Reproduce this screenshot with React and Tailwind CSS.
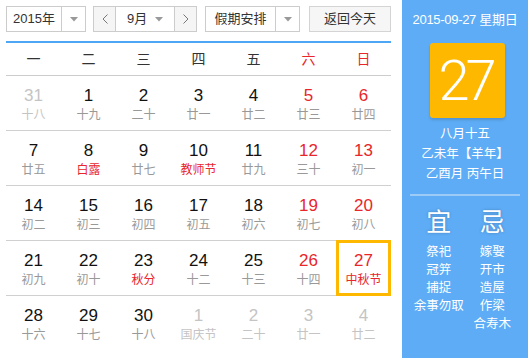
import React from "react";

const F = { fontFamily: '"Liberation Sans", Arial, "Noto Sans CJK SC", sans-serif' };

const rows = [
  [["31", "十八", "o"], ["1", "十九"], ["2", "二十"], ["3", "廿一"], ["4", "廿二"], ["5", "廿三", "w"], ["6", "廿四", "w"]],
  [["7", "廿五"], ["8", "白露", "h"], ["9", "廿七"], ["10", "教师节", "h"], ["11", "廿九"], ["12", "三十", "w"], ["13", "初一", "w"]],
  [["14", "初二"], ["15", "初三"], ["16", "初四"], ["17", "初五"], ["18", "初六"], ["19", "初七", "w"], ["20", "初八", "w"]],
  [["21", "初九"], ["22", "初十"], ["23", "秋分", "h"], ["24", "十二"], ["25", "十三"], ["26", "十四", "w"], ["27", "中秋节", "s"]],
  [["28", "十六"], ["29", "十七"], ["30", "十八"], ["1", "国庆节", "o"], ["2", "二十", "o"], ["3", "廿一", "o"], ["4", "廿二", "o"]],
];

function Caret() {
  return (
    <svg width="8" height="5" viewBox="0 0 8 5">
      <path d="M0 0H8L4 4.5Z" fill="#999" />
    </svg>
  );
}

function Chevron({ dir }) {
  return (
    <svg width="6" height="10" viewBox="0 0 6 10">
      <path d={dir === "l" ? "M5.5 0.5L1 5L5.5 9.5" : "M0.5 0.5L5 5L0.5 9.5"} fill="none" stroke="#777" strokeWidth="1" />
    </svg>
  );
}

function Cell({ d, last }) {
  const [n, l, t] = d;
  let numC = "text-[#111]";
  let lunC = "text-[#999]";
  if (t === "o") { numC = "text-[#c4c4c4]"; lunC = "text-[#c4c4c4]"; }
  if (t === "w") numC = "text-[#e8262b]";
  if (t === "h") lunC = "text-[#e8262b]";
  if (t === "s") { numC = "text-[#e8262b]"; lunC = "text-[#e8262b]"; }
  return (
    <div className={`relative flex flex-col items-center h-[55px] pt-[10px] ${last ? "" : "border-b border-[#d0d0d0]"}`}>
      {t === "s" && <div className="absolute left-0 right-0 top-[-1px] bottom-[-1px] border-[3px] border-[#ffb800]" />}
      <div className={`text-[17px] leading-[20px] ${numC}`}>{n}</div>
      <div className={`text-[12px] leading-[18px] ${lunC}`}>{l}</div>
    </div>
  );
}

export default function App() {
  return (
    <div className="w-[528px] h-[358px] flex overflow-hidden bg-white" style={F}>
      <div className="w-[402px] pl-[6px] pt-[6px]">
        <div className="w-[385px] flex h-[26px] text-[13px] text-[#333]">
          <div className="w-[80px] flex border border-[#ccc] bg-white">
            <div className="w-[54px] flex items-center justify-center">2015年</div>
            <div className="flex-1 flex items-center justify-center border-l border-[#ccc]"><Caret /></div>
          </div>
          <div className="ml-[7px] w-[104px] flex border border-[#ccc] bg-white">
            <div className="w-[22px] flex items-center justify-center bg-[#f5f5f5] border-r border-[#ccc]"><Chevron dir="l" /></div>
            <div className="flex-1 flex items-center pl-[11px]">9月</div>
            <div className="w-[22px] flex items-center justify-center mr-[4px]"><Caret /></div>
            <div className="w-[22px] flex items-center justify-center bg-[#f5f5f5] border-l border-[#ccc]"><Chevron dir="r" /></div>
          </div>
          <div className="ml-[8px] w-[95px] flex border border-[#ccc] bg-white">
            <div className="w-[69px] flex items-center justify-center">假期安排</div>
            <div className="flex-1 flex items-center justify-center border-l border-[#ccc]"><Caret /></div>
          </div>
          <div className="ml-[9px] w-[82px] flex items-center justify-center border border-[#d4d4d4] bg-[#f6f6f6]">返回今天</div>
        </div>
        <div className="w-[385px] h-[2px] bg-[#4ea7f5] mt-[9px]" />
        <div className="w-[385px] grid grid-cols-7 h-[33px] border-b border-[#ccc] text-[14px] text-[#333] items-center">
          {["一", "二", "三", "四", "五", "六", "日"].map((w, i) => (
            <div key={w} className={`text-center ${i >= 5 ? "text-[#e8262b]" : ""}`}>{w}</div>
          ))}
        </div>
        <div className="w-[385px] grid grid-cols-7">
          {rows.map((r, ri) => r.map((d, ci) => <Cell key={ri + "-" + ci} d={d} last={ri === rows.length - 1} />))}
        </div>
      </div>
      <div className="w-[126px] bg-[#5eacf6] flex flex-col items-center text-white">
        <div className="mt-[12px] text-[13px] leading-[16px] tracking-[-0.3px]">2015-09-27 星期日</div>
        <div className="mt-[15px] ml-[4px] w-[75px] h-[75px] rounded-[3px] bg-[#ffb800] shadow-[0_2px_3px_rgba(0,0,0,0.15)] flex items-center justify-center">
          <span className="text-[56px] leading-none tracking-[-4px] font-light pr-[3px]" style={{ fontFamily: 'Roboto, "Liberation Sans", sans-serif' }}>27</span>
        </div>
        <div className="mt-[6px] text-[12.5px] leading-[20px] text-center">
          <div>八月十五</div>
          <div>乙未年【羊年】</div>
          <div>乙酉月 丙午日</div>
        </div>
        <div className="mt-[10px] w-[110px] h-[2px] bg-[#9ccbf8]" />
        <div className="w-full flex mt-[12px] pl-[10px] pr-[9px]">
          <div className="flex-1 flex flex-col items-center">
            <div className="text-[25px] leading-[28px] [text-shadow:0_0_3px_rgba(0,0,0,0.25)]">宜</div>
            <div className="mt-[7px] text-[12.5px] leading-[18px] flex flex-col items-center">
              <div>祭祀</div><div>冠笄</div><div>捕捉</div><div>余事勿取</div>
            </div>
          </div>
          <div className="flex-1 flex flex-col items-center">
            <div className="text-[25px] leading-[28px] [text-shadow:0_0_3px_rgba(0,0,0,0.25)]">忌</div>
            <div className="mt-[7px] text-[12.5px] leading-[18px] flex flex-col items-center">
              <div>嫁娶</div><div>开市</div><div>造屋</div><div>作梁</div><div>合寿木</div>
            </div>
          </div>
        </div>
      </div>
    </div>
  );
}
